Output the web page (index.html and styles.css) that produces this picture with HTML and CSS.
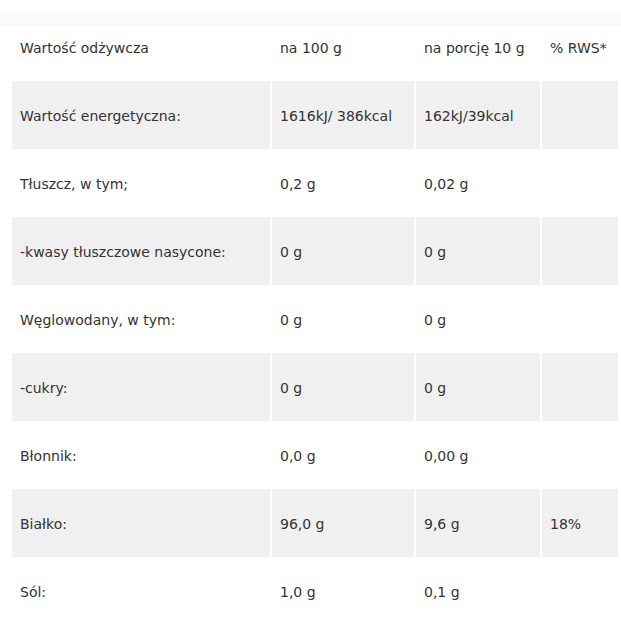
FILE: index.html
```html
<!DOCTYPE html>
<html lang="pl">
<head>
<meta charset="utf-8">
<link rel="stylesheet" href="styles.css">
</head>
<body>
<div class="page">
  <table class="nutri">
    <colgroup>
      <col class="c1"><col class="c2"><col class="c3"><col class="c4">
    </colgroup>
    <tr class="head"><td>Wartość odżywcza</td><td>na 100 g</td><td>na porcję 10 g</td><td>% RWS*</td></tr>
    <tr class="alt"><td>Wartość energetyczna:</td><td>1616kJ/ 386kcal</td><td>162kJ/39kcal</td><td></td></tr>
    <tr><td>Tłuszcz, w tym;</td><td>0,2 g</td><td>0,02 g</td><td></td></tr>
    <tr class="alt"><td>-kwasy tłuszczowe nasycone:</td><td>0 g</td><td>0 g</td><td></td></tr>
    <tr><td>Węglowodany, w tym:</td><td>0 g</td><td>0 g</td><td></td></tr>
    <tr class="alt"><td>-cukry:</td><td>0 g</td><td>0 g</td><td></td></tr>
    <tr><td>Błonnik:</td><td>0,0 g</td><td>0,00 g</td><td></td></tr>
    <tr class="alt"><td>Białko:</td><td>96,0 g</td><td>9,6 g</td><td>18%</td></tr>
    <tr><td>Sól:</td><td>1,0 g</td><td>0,1 g</td><td></td></tr>
  </table>
</div>
</body>
</html>
```
FILE: styles.css
```css
html, body {
  margin: 0;
  padding: 0;
  background: #ffffff;
}
body {
  font-family: "DejaVu Sans", "Liberation Sans", sans-serif;
  font-size: 14px;
  color: #333333;
}
.page {
  padding-top: 13px;
  background: linear-gradient(#fafafa, #fafafa) no-repeat 0 13px / 100% 13px;
  height: 621px;
  overflow: hidden;
}
.nutri {
  margin-left: 12px;
  width: 606px;
  border-collapse: collapse;
  table-layout: fixed;
}
.c1 { width: 259px; }
.c2 { width: 144px; }
.c3 { width: 126px; }
.c4 { width: 77px; }
.nutri td {
  height: 68px;
  padding: 2px 0 0 8px;
  vertical-align: middle;
  border-left: 2px solid #ffffff;
  box-sizing: border-box;
  white-space: nowrap;
}
.nutri tr.head td {
  border-left-color: transparent;
}
.nutri td:first-child {
  border-left: 0;
}
.nutri tr.alt td {
  background: #f0f0f0;
}
```
